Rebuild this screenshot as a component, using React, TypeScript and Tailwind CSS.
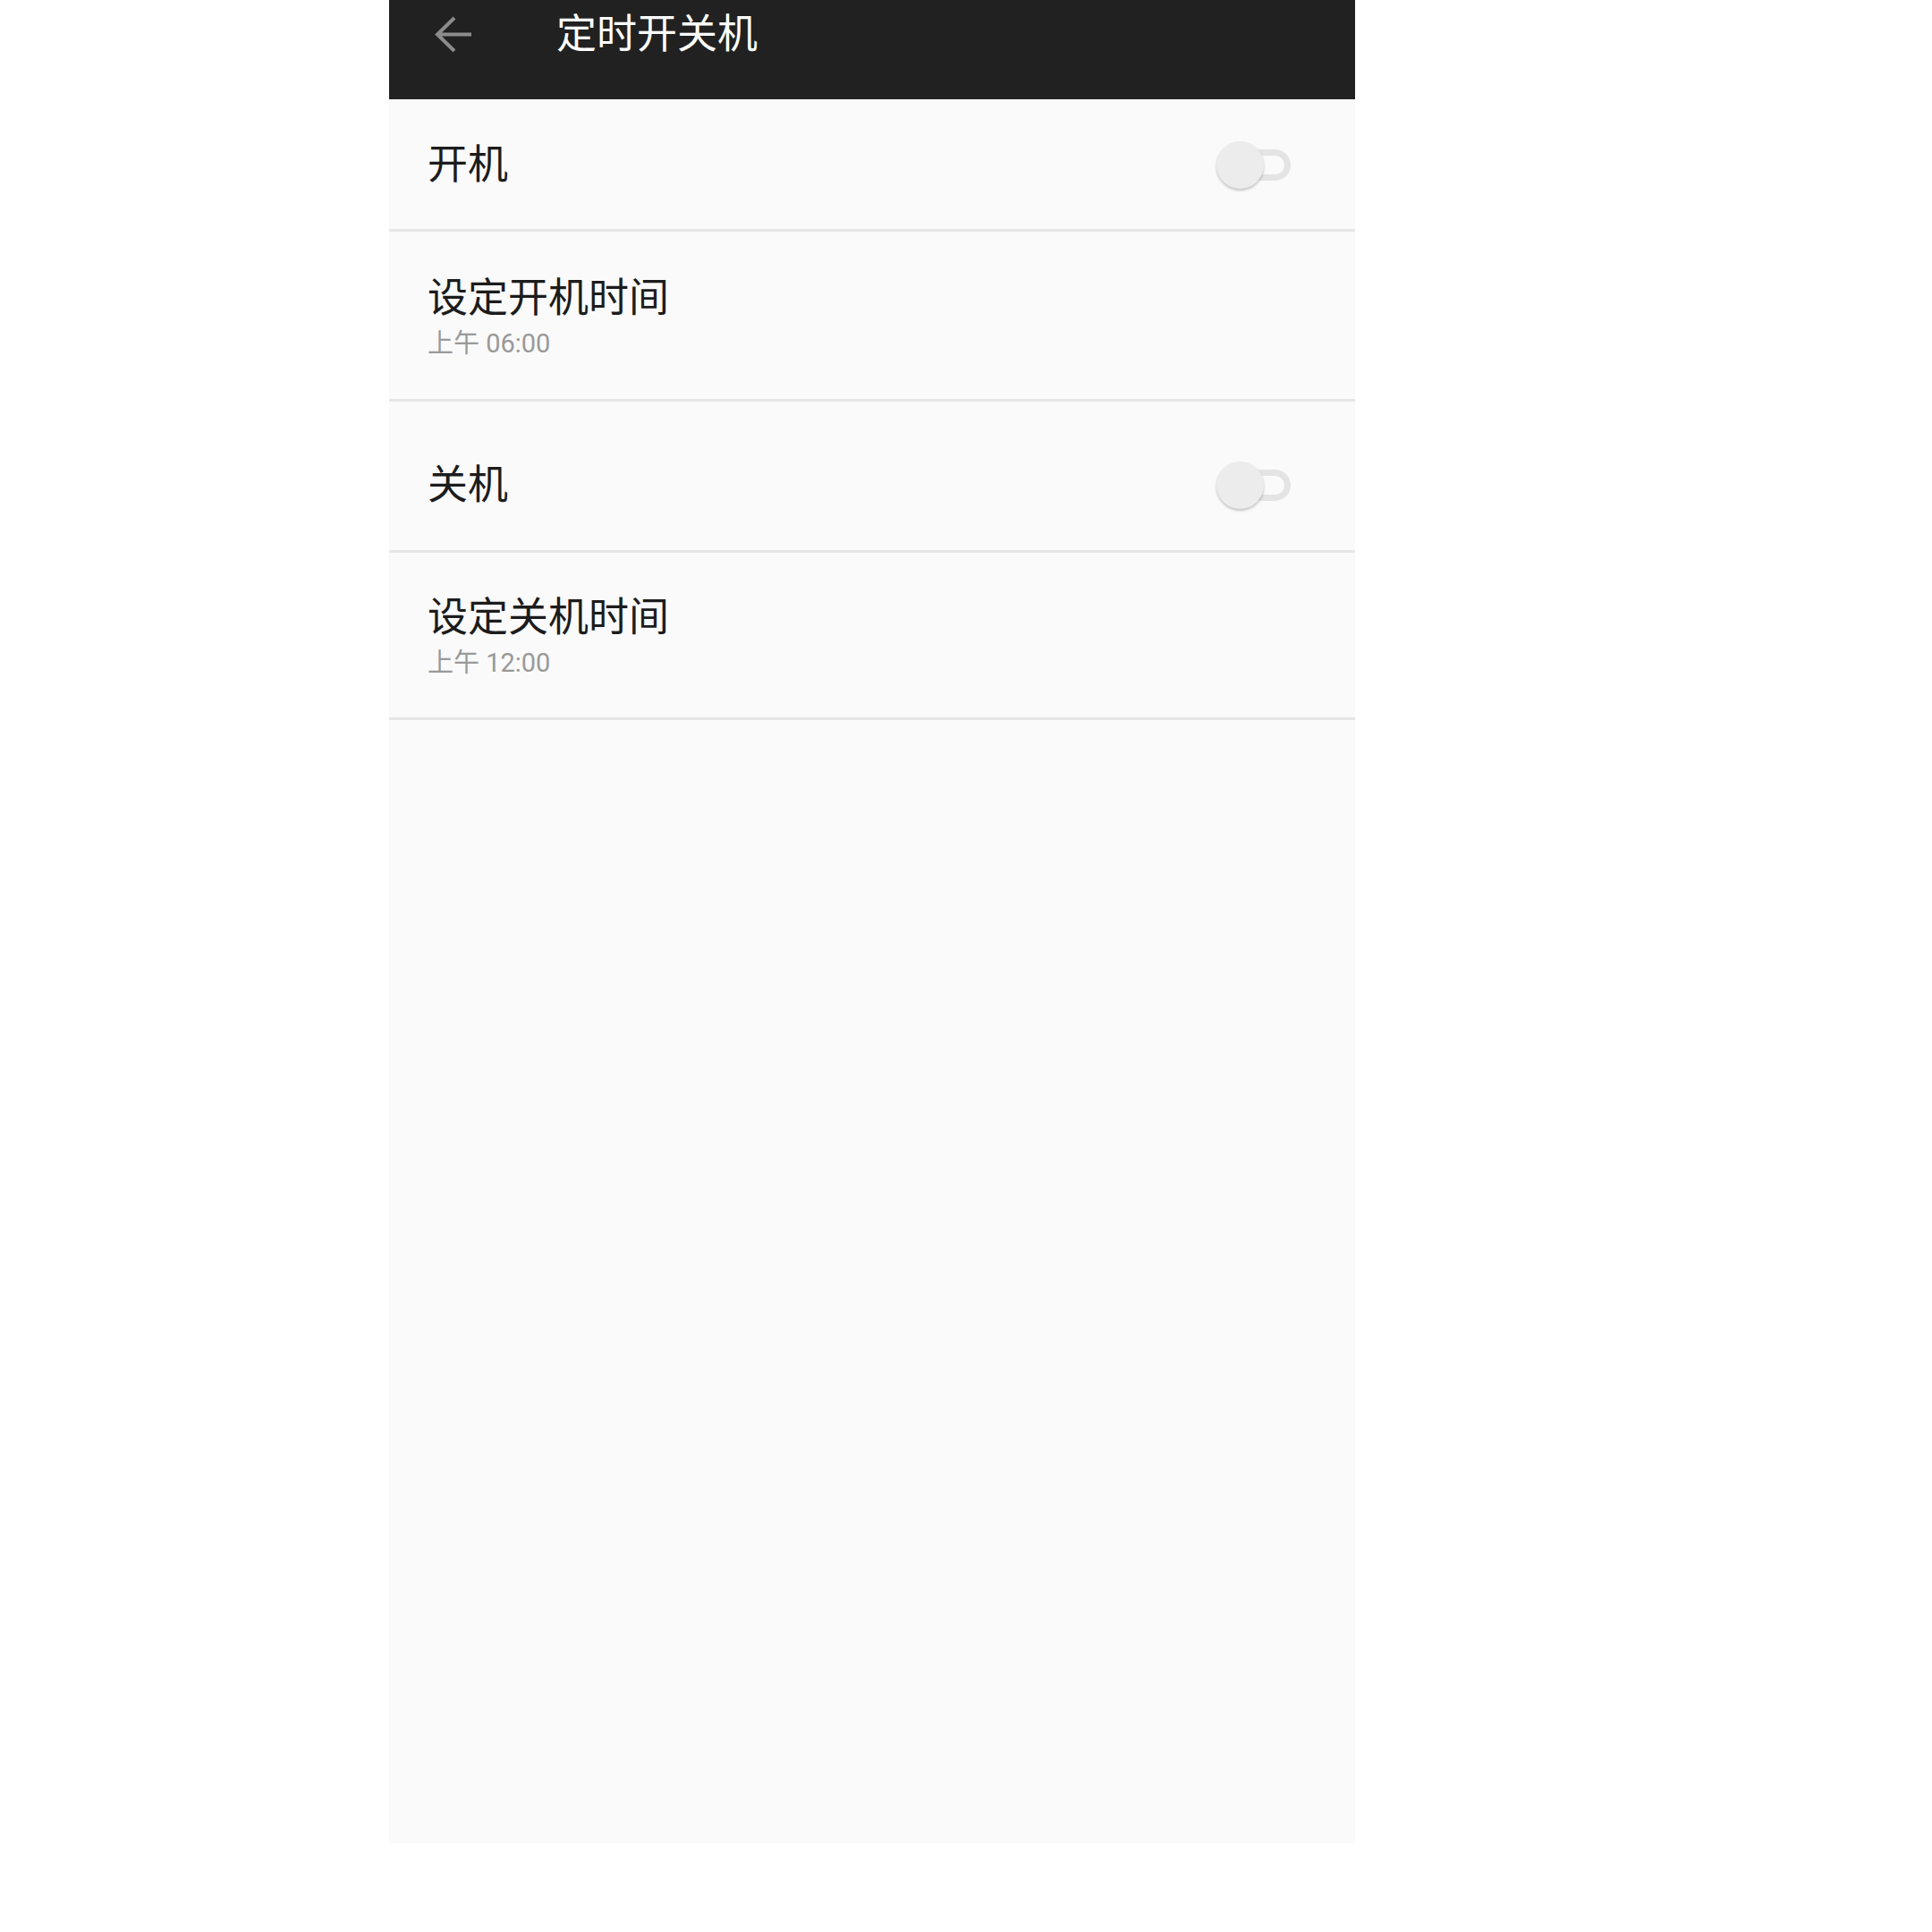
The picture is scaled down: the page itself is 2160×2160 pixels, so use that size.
const font = { fontFamily: 'Roboto, "Noto Sans CJK SC", sans-serif' }

function Toggle() {
  return (
    <div className="relative w-[83px] h-[53px] shrink-0">
      <div className="absolute right-0 top-[9px] w-[70px] h-[35px] rounded-full border-[7px] border-[#e4e4e4] bg-[#fafafa]" />
      <div className="absolute left-0 top-0 w-[53px] h-[53px] rounded-full bg-[#ececec] shadow-[0_2px_3px_rgba(0,0,0,0.22)]" />
    </div>
  )
}

function Divider() {
  return <div className="h-[3px] bg-[#e6e6e6]" />
}

function SwitchRow({ label, height, offset }: { label: string; height: string; offset: string }) {
  return (
    <div className={`flex items-center justify-between pl-[43px] pr-[72px] ${height} ${offset}`}>
      <span className="text-[45px] leading-none text-[#1c1c1c]">{label}</span>
      <Toggle />
    </div>
  )
}

function TimeRow({ label, time, height }: { label: string; time: string; height: string }) {
  return (
    <div className={`flex flex-col justify-center pl-[43px] pt-[4px] ${height}`}>
      <span className="text-[45px] leading-none text-[#1c1c1c]">{label}</span>
      <span className="mt-[14px] text-[29px] leading-none text-[#999999]">{time}</span>
    </div>
  )
}

export default function App() {
  return (
    <div className="w-full h-[2160px] bg-white" style={font}>
      <div className="ml-[435px] w-[1080px] h-[2061px] bg-[#fafafa] flex flex-col">
        <div className="h-[111px] bg-[#212121]">
          <div className="flex items-center h-[77px]">
            <svg className="ml-[51px]" width="41" height="41" viewBox="0 0 41 41" fill="none">
              <path d="M3 20.5H41M22 2L3 20.5L22 39" stroke="#8c8c8c" strokeWidth="4" />
            </svg>
            <span className="ml-[95px] text-[45px] leading-none text-white">定时开关机</span>
          </div>
        </div>
        <SwitchRow label="开机" height="h-[145px]" offset="pt-[2px]" />
        <Divider />
        <TimeRow label="设定开机时间" time="上午 06:00" height="h-[187px]" />
        <Divider />
        <SwitchRow label="关机" height="h-[166px]" offset="pt-[20px]" />
        <Divider />
        <TimeRow label="设定关机时间" time="上午 12:00" height="h-[184px]" />
        <Divider />
      </div>
    </div>
  )
}
